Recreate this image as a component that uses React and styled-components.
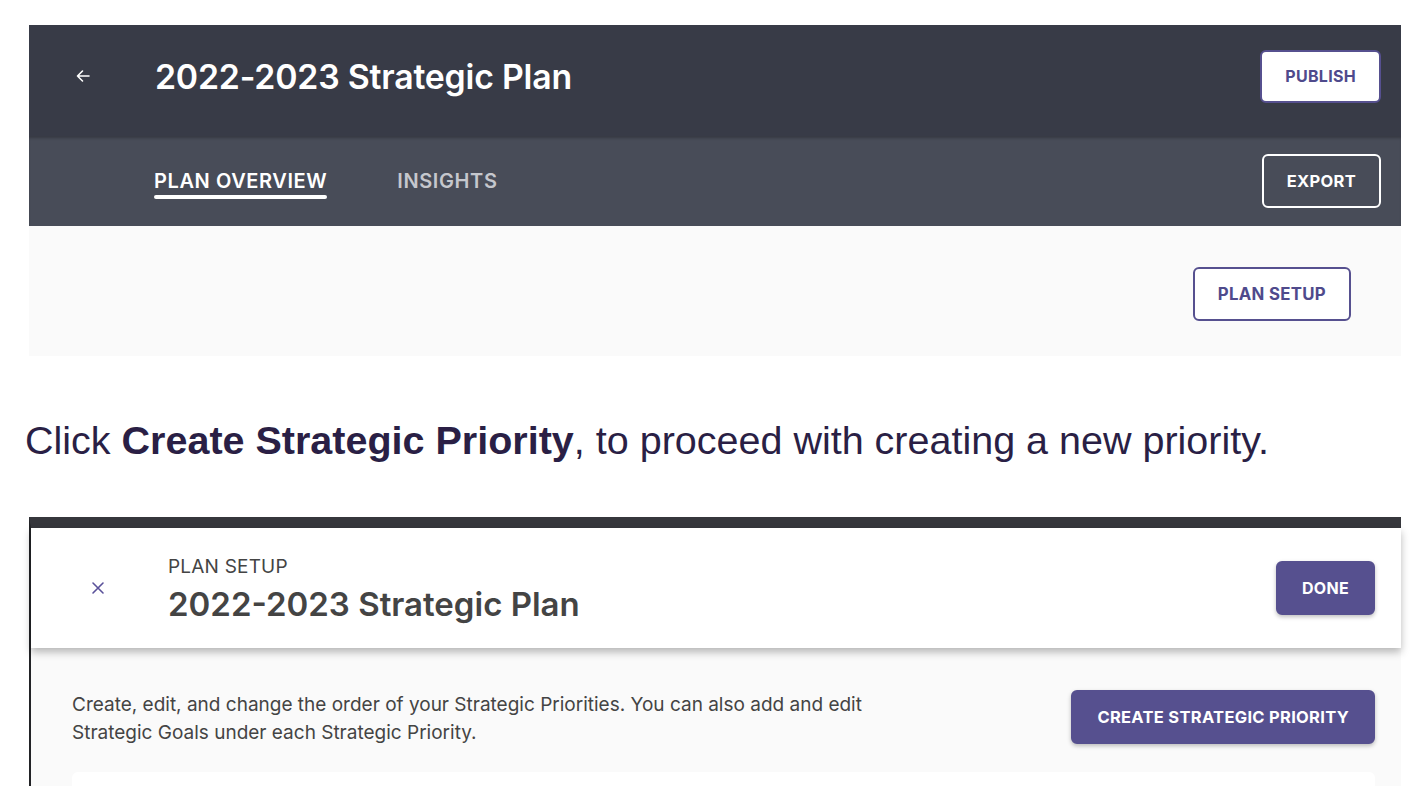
import React from 'react';
import styled, { createGlobalStyle } from 'styled-components';

const GlobalStyle = createGlobalStyle`
    html, body {
        margin: 0;
        padding: 0;
        background: #ffffff;
        font-family: Inter, "Noto Sans", sans-serif;
    }
`;

const PAGE = styled.div`
    width: 1420px;
    height: 786px;
    overflow: hidden;
    padding-top: 25px;
    box-sizing: border-box;
`;

const SHOT = styled.div`
    margin-left: 29px;
    width: 1372px;
`;

const HEADER = styled.div`
    height: 111px;
    background: #383b47;
    display: flex;
    align-items: center;
    padding: 0 20px 9px 46px;
    box-sizing: border-box;

    h1 {
        margin: 0;
        color: #ffffff;
        font-size: 33.8px;
        font-weight: 600;
        letter-spacing: -0.2px;
        flex: 1;
    }
`;

const BackButton = styled.span`
    width: 80px;
    display: flex;
    align-items: center;
    color: #ffffff;
`;

const TABS = styled.div`
    height: 90px;
    background: #484c58;
    box-shadow: inset 0 3px 3px -1px rgba(0, 0, 0, 0.25);
    display: flex;
    align-items: center;
    padding: 0 20px 0 125px;
    box-sizing: border-box;
    gap: 70px;
`;

const Tab = styled.span`
    position: relative;
    font-size: 20px;
    font-weight: 600;
    letter-spacing: 0.6px;
    color: ${p => (p.active ? '#ffffff' : '#c5c7cd')};
    padding: 8px 0;

    &::after {
        content: '';
        display: ${p => (p.active ? 'block' : 'none')};
        position: absolute;
        left: 0;
        right: 0;
        bottom: 2px;
        height: 4px;
        border-radius: 2px;
        background: #ffffff;
    }
`;

const Spacer = styled.div`
    flex: 1;
`;

const Button = styled.button`
    font-family: Inter, "Noto Sans", sans-serif;
    font-size: ${p => p.fs || 16}px;
    font-weight: 700;
    letter-spacing: 0.3px;
    height: ${p => p.h || 54}px;
    padding: 0 ${p => p.px || 23}px;
    border-radius: 6px;
    cursor: pointer;
    border: 2px solid ${p => (p.variant === 'ghost' ? '#ffffff' : '#56508f')};
    color: ${p => (p.variant === 'outline' ? '#4f4a8c' : '#ffffff')};
    background: ${p =>
        p.variant === 'outline' ? '#ffffff' : p.variant === 'ghost' ? 'transparent' : '#56508f'};
    box-shadow: ${p => (p.variant === 'solid' ? '0 2px 4px rgba(0,0,0,0.25)' : 'none')};
`;

const OVERVIEW = styled.div`
    height: 130px;
    background: #fafafa;
    display: flex;
    justify-content: flex-end;
    align-items: flex-start;
    padding: 41px 50px 0 0;
    box-sizing: border-box;
`;

const CAPTION = styled.p`
    margin: 0;
    padding: 62px 0 0 25px;
    height: 161px;
    box-sizing: border-box;
    font-family: "Liberation Sans", Arial, sans-serif;
    font-size: 39.5px;
    color: #2a1f45;

    b {
        font-weight: 700;
    }
`;

const SETUP = styled.div`
    margin-left: 29px;
    width: 1372px;
    border-top: 11px solid #36373c;
    border-left: 2px solid #222326;
    box-sizing: border-box;
    height: 280px;
    background: #fafafa;
`;

const SETUPHEADER = styled.div`
    position: relative;
    height: 120px;
    background: #ffffff;
    box-shadow: 0 4px 8px rgba(0, 0, 0, 0.28);
    display: flex;
    align-items: center;
    padding: 0 26px 0 60px;
    box-sizing: border-box;
`;

const CloseButton = styled.span`
    width: 77px;
    display: flex;
    align-items: center;
    color: #5a519a;
`;

const TITLEBLOCK = styled.div`
    flex: 1;
    display: flex;
    flex-direction: column;
    gap: 6px;
    padding-top: 3px;

    small {
        font-size: 19px;
        color: #444444;
        letter-spacing: 0.2px;
    }

    h2 {
        margin: 0;
        font-size: 33px;
        font-weight: 600;
        color: #444444;
    }
`;

const SETUPBODY = styled.div`
    padding: 42px 26px 0 41px;
`;

const INTRO = styled.div`
    display: flex;
    justify-content: space-between;
    align-items: flex-start;

    p {
        margin: 1px 0 0 0;
        width: 850px;
        font-size: 19px;
        line-height: 28px;
        color: #444444;
    }
`;

const CARD = styled.div`
    margin-top: 25px;
    height: 60px;
    background: #ffffff;
    border-radius: 6px;
`;

const ArrowIcon = () => (
    <svg width="16" height="16" viewBox="0 0 16 16" fill="none" stroke="currentColor" strokeWidth="1.6" strokeLinecap="round" strokeLinejoin="round">
        <path d="M14 8H2.5M7.5 3L2.5 8l5 5" />
    </svg>
);

const CloseIcon = () => (
    <svg width="14" height="14" viewBox="0 0 14 14" fill="none" stroke="currentColor" strokeWidth="1.6" strokeLinecap="round">
        <path d="M2 2l10 10M12 2L2 12" />
    </svg>
);

const App = () => {
    return (
        <PAGE>
            <GlobalStyle />
            <SHOT>
                <HEADER>
                    <BackButton><ArrowIcon /></BackButton>
                    <h1>2022-2023 Strategic Plan</h1>
                    <Button variant="outline" px={23} h={53}>PUBLISH</Button>
                </HEADER>
                <TABS>
                    <Tab active>PLAN OVERVIEW</Tab>
                    <Tab>INSIGHTS</Tab>
                    <Spacer />
                    <Button variant="ghost" px={23} fs={16.5}>EXPORT</Button>
                </TABS>
                <OVERVIEW>
                    <Button variant="outline" px={23} fs={16.8}>PLAN SETUP</Button>
                </OVERVIEW>
            </SHOT>
            <CAPTION>
                Click <b>Create Strategic Priority</b>, to proceed with creating a new priority.
            </CAPTION>
            <SETUP>
                <SETUPHEADER>
                    <CloseButton><CloseIcon /></CloseButton>
                    <TITLEBLOCK>
                        <small>PLAN SETUP</small>
                        <h2>2022-2023 Strategic Plan</h2>
                    </TITLEBLOCK>
                    <Button variant="solid" px={24}>DONE</Button>
                </SETUPHEADER>
                <SETUPBODY>
                    <INTRO>
                        <p>
                            Create, edit, and change the order of your Strategic Priorities. You can also add and edit
                            Strategic Goals under each Strategic Priority.
                        </p>
                        <Button variant="solid" px={24} fs={16.5}>CREATE STRATEGIC PRIORITY</Button>
                    </INTRO>
                    <CARD />
                </SETUPBODY>
            </SETUP>
        </PAGE>
    );
};

export default App;
